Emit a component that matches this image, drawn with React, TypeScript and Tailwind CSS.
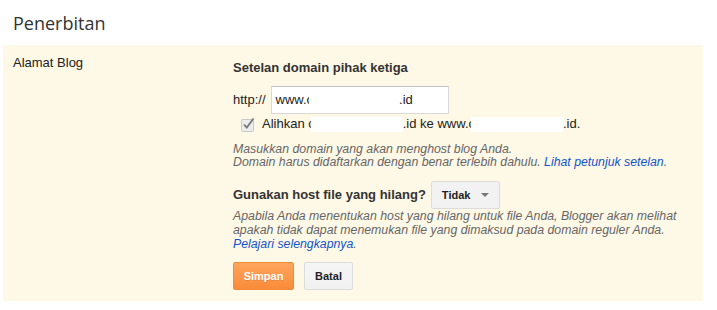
import React from "react";

const Redact = ({ w }: { w: number }) => (
  <span
    className="inline-block h-[15px] bg-white align-middle -ml-[4px]"
    style={{ width: w }}
  />
);

const CheckMark = () => (
  <svg width="15" height="15" viewBox="0 0 15 15" className="block">
    <rect x="0.5" y="2.5" width="12" height="12" rx="1" fill="#ececec" stroke="#c8c8c8" />
    <path d="M3 7.5 L5.8 10.5 L12.5 1.5" fill="none" stroke="#777" strokeWidth="1.8" />
  </svg>
);

export default function App() {
  return (
    <div className="w-[717px] h-[310px] bg-white font-['Liberation_Sans',Arial,sans-serif] text-[13px] text-[#222]">
      <div className="pt-[11px] pl-[13px] font-['Open_Sans',sans-serif] text-[18px] leading-[24px] text-[#333]">
        Penerbitan
      </div>

      <div className="mt-[10px] ml-[3px] w-[700px] bg-[#fef8e6] pt-[10px] pb-[11px] flex">
        <div className="w-[230px] pl-[10px] leading-[16px] text-[#222]">Alamat Blog</div>

        <div className="flex flex-col">
          <div className="mt-[5px] font-bold leading-[16px] text-[#333]">Setelan domain pihak ketiga</div>

          <div className="mt-[10px] flex items-center gap-[5px]">
            <span className="leading-[16px] text-[#222]">http://</span>
            <div className="w-[178px] h-[28px] bg-white border border-[#d9d9d9] border-t-[#c0c0c0] flex items-center pl-[4px] text-[13px] text-[#222] whitespace-nowrap">
              <span>www.c</span>
              <Redact w={90} />
              <span>.id</span>
            </div>
          </div>

          <div className="mt-[2px] flex items-center whitespace-nowrap leading-[16px]">
            <span className="ml-[8px] mr-[6px]">
              <CheckMark />
            </span>
            <span className="text-[#222]">Alihkan c</span>
            <Redact w={92} />
            <span className="text-[#222]">.id ke www.c</span>
            <Redact w={92} />
            <span className="text-[#222]">.id.</span>
          </div>

          <div className="mt-[11px] text-[12.3px] italic leading-[13px] text-[#666] whitespace-nowrap">
            Masukkan domain yang akan menghost blog Anda.
            <br />
            Domain harus didaftarkan dengan benar terlebih dahulu.{" "}
            <a className="text-[#15c]">Lihat petunjuk setelan</a>.
          </div>

          <div className="mt-[12px] flex items-center gap-[5px]">
            <span className="font-bold text-[#333] leading-[16px]">Gunakan host file yang hilang?</span>
            <button className="h-[28px] pl-[10px] pr-[10px] flex items-center gap-[11px] bg-[#f2f2f2] border border-[#dcdcdc] rounded-[2px] text-[11px] font-bold text-[#222]">
              <span>Tidak</span>
              <span className="w-0 h-0 border-l-[4px] border-r-[4px] border-t-[4px] border-l-transparent border-r-transparent border-t-[#777]" />
            </button>
          </div>

          <div className="mt-0 text-[12.3px] italic leading-[14px] text-[#666] whitespace-nowrap">
            Apabila Anda menentukan host yang hilang untuk file Anda, Blogger akan melihat
            <br />
            apakah tidak dapat menemukan file yang dimaksud pada domain reguler Anda.
            <br />
            <a className="text-[#15c]">Pelajari selengkapnya</a>.
          </div>

          <div className="mt-[11px] flex gap-[10px]">
            <button className="w-[61px] h-[28px] rounded-[2px] border border-[#f28c3c] bg-gradient-to-b from-[#fea55e] to-[#f98b38] text-white text-[11px] font-bold [text-shadow:0_1px_0_rgba(0,0,0,0.1)]">
              Simpan
            </button>
            <button className="w-[49px] h-[28px] rounded-[2px] border border-[#dcdcdc] bg-gradient-to-b from-[#f5f5f5] to-[#f1f1f1] text-[#222] text-[11px] font-bold">
              Batal
            </button>
          </div>
        </div>
      </div>
    </div>
  );
}
